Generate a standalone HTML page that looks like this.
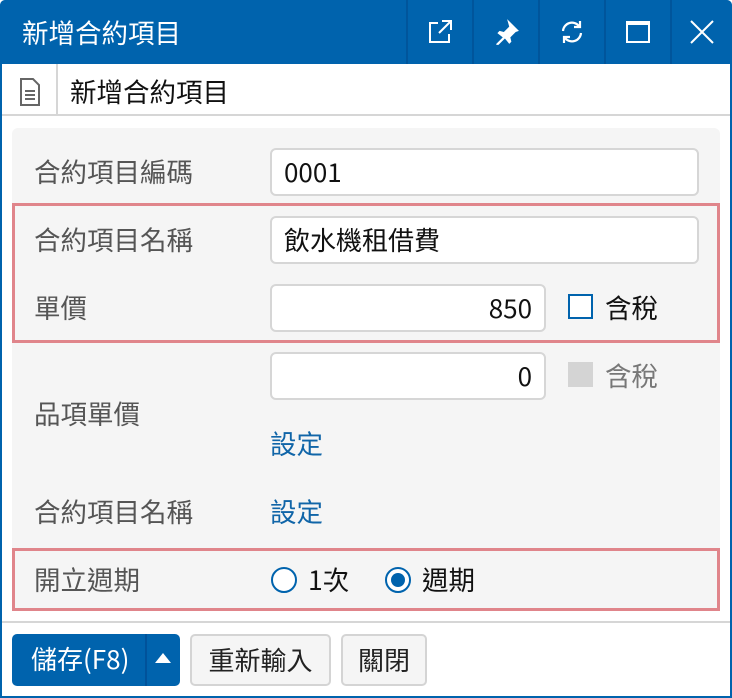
<!DOCTYPE html>
<html><head><meta charset="utf-8"><style>
*{box-sizing:border-box;margin:0;padding:0}
body{width:732px;height:698px;background:#fff;font-family:"Noto Sans CJK TC","Liberation Sans",sans-serif;position:relative;overflow:hidden;font-weight:400}
.a{position:absolute;line-height:34px}
.win{left:0;top:0;width:732px;height:698px;border:2px solid #0063ad;border-radius:6px 6px 0 0;background:#fff}
.title{left:0;top:0;width:732px;height:64px;background:#0063ad;border-radius:5px 5px 0 0;color:#fff;font-size:26.5px;line-height:64px;padding-left:22px}
.tb{top:0;width:66px;height:64px;border-left:2px solid #00559b;display:flex;align-items:center;justify-content:center}
.lbl{font-size:26.5px;color:#555;left:34px}
.inp{background:#fff;border:2px solid #d6d6d6;border-radius:6px;font-size:26px;color:#111;padding:0 12px;line-height:44px}
.red{border:3px solid #e0858b;left:12px;width:708px}
.link{color:#1065a8;font-size:26.5px}
.btn{border:2px solid #d4d4d4;border-radius:5px;background:#f5f5f5;font-size:26px;color:#222;text-align:center;line-height:47px;top:634px;height:52px}
</style></head><body>
<div class="a win"></div>
<div class="a title">新增合約項目</div>
<div class="a tb" style="left:406px"><svg width="26" height="26" viewBox="0 0 26 26" fill="none" stroke="#fff" stroke-width="2"><path d="M11 4H3v19h19v-8"/><path d="M15 2h9v9M24 2L12 14"/></svg></div>
<div class="a tb" style="left:472px"><svg width="28" height="28" viewBox="0 0 26 26" fill="#fff"><path d="M14 1l11 11-3 1-5 5 1 4-2 2-4-5-6 6-2 0 0-1 6-6-5-4 2-2 4 1 5-5z"/></svg></div>
<div class="a tb" style="left:538px"><svg width="26" height="26" viewBox="0 0 26 26" fill="none" stroke="#fff" stroke-width="2.2"><path d="M4 12a9 9 0 0 1 16-5M22 14a9 9 0 0 1-16 5"/><path d="M21 2v6h-6M5 24v-6h6"/></svg></div>
<div class="a tb" style="left:604px"><div style="width:24px;height:22px;border:2px solid #fff;border-top-width:4px"></div></div>
<div class="a tb" style="left:670px;width:62px"><svg width="24" height="24" viewBox="0 0 24 24" stroke="#fff" stroke-width="2"><path d="M1 1L23 23M23 1L1 23"/></svg></div>
<div class="a" style="left:2px;top:64px;width:728px;height:52px;border-bottom:2px solid #d6d6d6"></div>
<div class="a" style="left:56px;top:64px;width:2px;height:52px;background:#d6d6d6"></div>
<svg class="a" style="left:20px;top:78px" width="20" height="28" viewBox="0 0 20 28" fill="none" stroke="#666" stroke-width="2"><path d="M1 1h12l6 6v20H1z"/><path d="M5 13h10M5 17h10M5 21h10"/></svg>
<div class="a" style="left:70px;top:74px;font-size:26.5px;color:#111">新增合約項目</div>
<div class="a" style="left:12px;top:128px;width:708px;height:482px;background:#f5f5f5;border-radius:6px 6px 0 0"></div>
<div class="a lbl" style="top:154px">合約項目編碼</div>
<div class="a inp" style="left:270px;top:148px;width:429px;height:48px">0001</div>
<div class="a red" style="top:203px;height:140px"></div>
<div class="a lbl" style="top:222px">合約項目名稱</div>
<div class="a inp" style="left:270px;top:216px;width:429px;height:48px">飲水機租借費</div>
<div class="a lbl" style="top:290px">單價</div>
<div class="a inp" style="left:270px;top:284px;width:276px;height:48px;text-align:right">850</div>
<div class="a" style="left:568px;top:294px;width:25px;height:25px;border:2px solid #0063ad;background:#fff"></div>
<div class="a" style="left:605px;top:290px;font-size:26.5px;color:#111">含稅</div>
<div class="a inp" style="left:270px;top:352px;width:276px;height:48px;text-align:right">0</div>
<div class="a" style="left:568px;top:362px;width:25px;height:25px;background:#d4d4d4"></div>
<div class="a" style="left:605px;top:358px;font-size:26.5px;color:#777">含稅</div>
<div class="a lbl" style="top:396px">品項單價</div>
<div class="a link" style="left:270px;top:426px">設定</div>
<div class="a lbl" style="top:494px">合約項目名稱</div>
<div class="a link" style="left:270px;top:494px">設定</div>
<div class="a red" style="top:548px;height:63px"></div>
<div class="a lbl" style="top:562px">開立週期</div>
<div class="a" style="left:271px;top:567px;width:26px;height:26px;border:2px solid #0063ad;border-radius:50%;background:#fff"></div>
<div class="a" style="left:308px;top:562px;font-size:26.5px;color:#111">1次</div>
<div class="a" style="left:385px;top:567px;width:26px;height:26px;border:2px solid #0063ad;border-radius:50%;background:#fff"><div style="margin:4px;width:14px;height:14px;border-radius:50%;background:#0063ad"></div></div>
<div class="a" style="left:422px;top:562px;font-size:26.5px;color:#111">週期</div>
<div class="a" style="left:2px;top:621px;width:728px;height:2px;background:#d6d6d6"></div>
<div class="a" style="left:12px;top:634px;width:168px;height:52px;background:#0063ad;border-radius:5px;color:#fff;font-size:26px;line-height:50px;padding-left:19px">儲存(F8)</div>
<div class="a" style="left:145px;top:634px;width:2px;height:52px;background:#00529a"></div>
<div class="a" style="left:155px;top:653px;width:0;height:0;border-left:8px solid transparent;border-right:8px solid transparent;border-bottom:10px solid #fff"></div>
<div class="a btn" style="left:190px;width:141px">重新輸入</div>
<div class="a btn" style="left:341px;width:86px">關閉</div>
</body></html>
